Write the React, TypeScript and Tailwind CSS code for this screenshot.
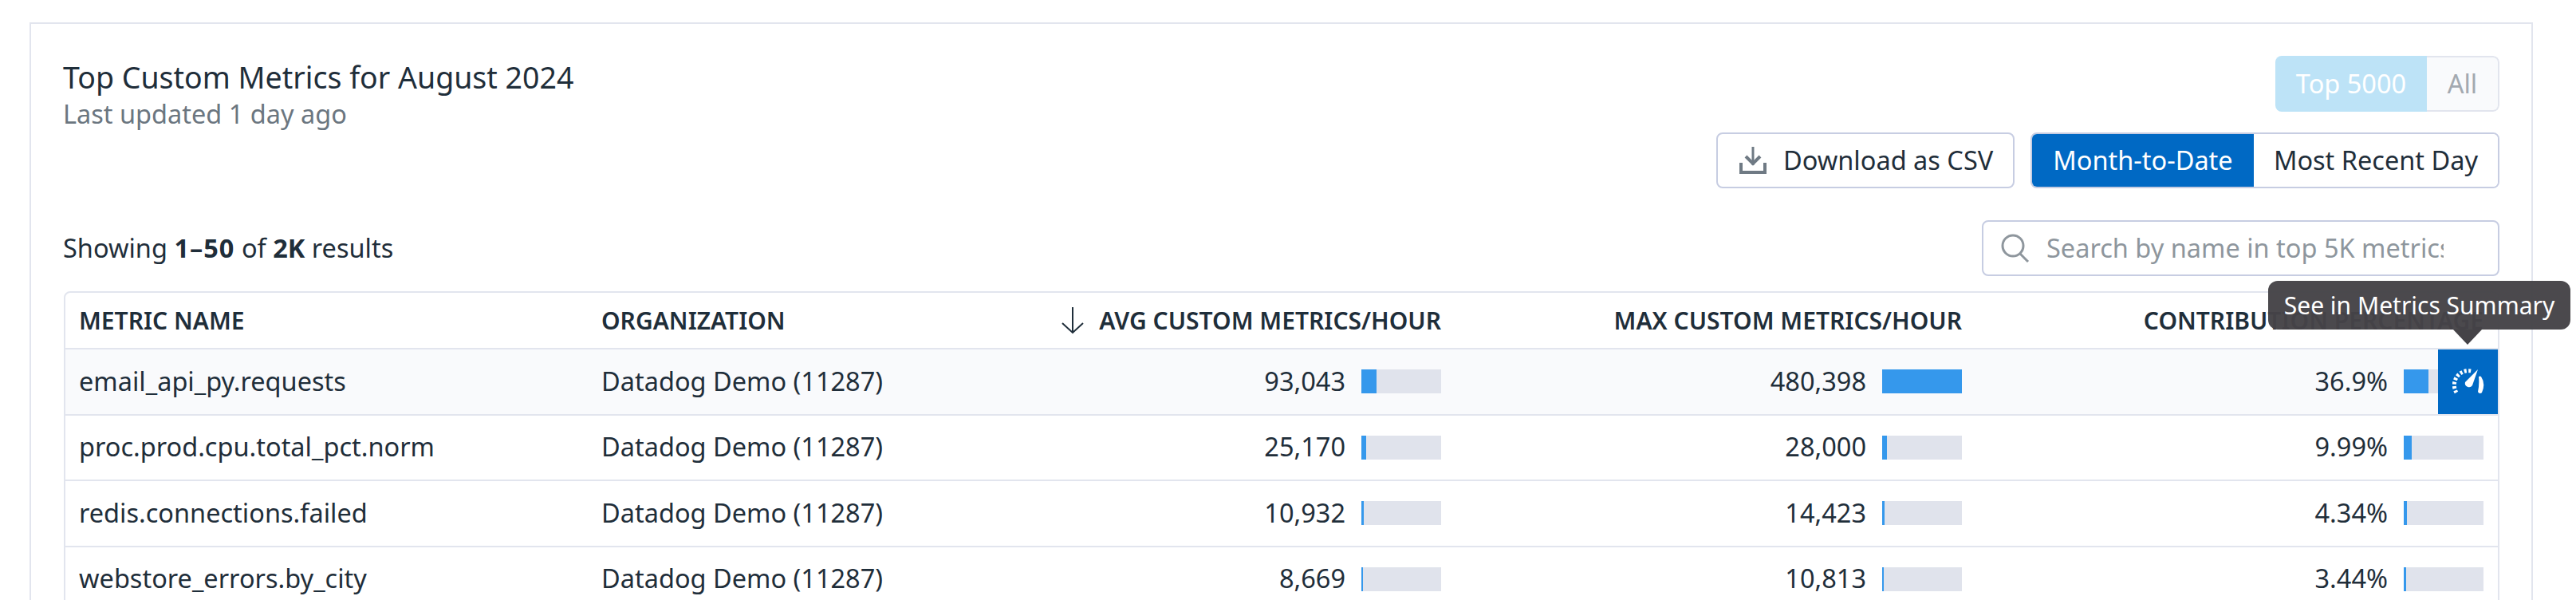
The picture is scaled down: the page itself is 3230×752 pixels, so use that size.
type Row = {
  name: string;
  avg: string;
  avgBar: number;
  max: string;
  maxBar: number;
  pct: string;
  pctBar: number;
};

const rows: Row[] = [
  { name: "email_api_py.requests", avg: "93,043", avgBar: 19, max: "480,398", maxBar: 100, pct: "36.9%", pctBar: 31 },
  { name: "proc.prod.cpu.total_pct.norm", avg: "25,170", avgBar: 6, max: "28,000", maxBar: 6, pct: "9.99%", pctBar: 10 },
  { name: "redis.connections.failed", avg: "10,932", avgBar: 3, max: "14,423", maxBar: 3, pct: "4.34%", pctBar: 4 },
  { name: "webstore_errors.by_city", avg: "8,669", avgBar: 2, max: "10,813", maxBar: 2, pct: "3.44%", pctBar: 3 },
];

const gridCols = "grid grid-cols-[654px_464px_625px_653px_654px]";

function ValueBar({ value, fill }: { value: string; fill: number }) {
  return (
    <div className="flex items-center justify-end gap-5 pr-[18px]">
      <span>{value}</span>
      <div className="h-[30px] w-[100px] bg-[#e0e3ec]">
        <div className="h-full bg-[#3598ec]" style={{ width: fill }} />
      </div>
    </div>
  );
}

function GaugeIcon() {
  return (
    <svg width="40" height="32" viewBox="0 0 40 32" fill="none">
      <path d="M5 30 A18 18 0 0 1 24 3" stroke="white" strokeWidth="5" strokeDasharray="3 2.4" />
      <path d="M33 10 Q35 9 36 10 Q42 19 37 30 A3 3 0 0 1 32 29 Q34 20 33 10 Z" fill="white" />
      <path d="M32 1 L25 21 A5 5 0 0 1 16 17 Z" fill="white" />
    </svg>
  );
}

export default function App() {
  return (
    <div className="h-[752px] overflow-hidden bg-white pt-[28px] pl-[37px] font-['Noto_Sans',sans-serif] text-[#1f2e3a]">
      <div className="relative h-[800px] w-[3139px] border-2 border-[#e2e5ee] px-[40px] pt-[40px]">
        <div className="flex justify-between">
          <div>
            <h1 className="pt-[3px] text-[37.5px] leading-[48px] font-normal">Top Custom Metrics for August 2024</h1>
            <p className="text-[32.5px] leading-[44px] text-[#6b7680]">Last updated 1 day ago</p>
          </div>
          <div className="flex flex-col items-end gap-[26px]">
            <div className="flex h-[70px] w-[281px] overflow-hidden rounded-lg text-[32.5px]">
              <div className="flex w-[190px] items-center justify-center bg-[#bde3f7] text-white">Top 5000</div>
              <div className="flex flex-1 items-center justify-center rounded-r-lg border-2 border-l-0 border-[#e2e5ee] bg-[#f9fafc] text-[#a3a9b0]">All</div>
            </div>
            <div className="flex gap-5 text-[32.5px]">
              <button className="flex h-[70px] w-[374px] items-center gap-[21px] rounded-lg border-2 border-[#c7cde2] bg-white pl-[27px]">
                <svg width="34" height="34" viewBox="0 0 34 34" fill="none" stroke="#6f7a84">
                  <path d="M17 0 V23" strokeWidth="3" />
                  <path d="M8 12 L17 21 L26 12" strokeWidth="4" />
                  <path d="M2 20 V32 H32 V20" strokeWidth="4" />
                </svg>
                Download as CSV
              </button>
              <div className="flex h-[70px] w-[588px] overflow-hidden rounded-lg border-2 border-[#c7cde2]">
                <div className="-m-[2px] flex w-[282px] items-center justify-center bg-[#0069c4] text-white">Month-to-Date</div>
                <div className="flex flex-1 items-center justify-center bg-white">Most Recent Day</div>
              </div>
            </div>
          </div>
        </div>

        <div className="mt-[40px] flex items-center justify-between">
          <p className="text-[32.5px]">
            Showing <b className="font-bold tracking-[1px]">1–50</b> of <b className="font-bold">2K</b> results
          </p>
          <div className="flex h-[70px] w-[649px] items-center gap-[21px] rounded-lg border-2 border-[#c7cde2] pl-[22px]">
            <svg width="36" height="36" viewBox="0 0 36 36" fill="none" stroke="#8e969d" strokeWidth="3">
              <circle cx="15" cy="15" r="13" />
              <path d="M24 25 L34 35" />
            </svg>
            <span className="w-[498px] overflow-hidden text-[32.5px] whitespace-nowrap text-[#8e969d]">Search by name in top 5K metrics</span>
          </div>
        </div>

        <div className="mt-[19px] ml-px rounded-t-lg border-2 border-[#e2e5ee] text-[32.5px]">
          <div className={`${gridCols} h-[69px] items-center text-[30px] font-semibold`}>
            <div className="pl-[17px]">METRIC NAME</div>
            <div className="pl-[18px]">ORGANIZATION</div>
            <div className="flex items-center justify-end gap-[19px] pr-[18px]">
              <svg width="28" height="34" viewBox="0 0 28 34" fill="none" stroke="#1f2e3a" strokeWidth="2">
                <path d="M14 0 V32 M1 20 L14 32 L27 20" />
              </svg>
              AVG CUSTOM METRICS/HOUR
            </div>
            <div className="pr-[18px] text-right">MAX CUSTOM METRICS/HOUR</div>
            <div className="pr-[18px] text-right whitespace-nowrap">CONTRIBUTION PERCENTAGE</div>
          </div>
          {rows.map((row, i) => (
            <div
              key={row.name}
              className={`${gridCols} relative h-[82.5px] items-center border-t-2 border-[#e2e5ee] ${i === 0 ? "bg-[#f9fafc]" : ""}`}
            >
              <div className="pl-[17px]">{row.name}</div>
              <div className="pl-[18px]">Datadog Demo (11287)</div>
              <ValueBar value={row.avg} fill={row.avgBar} />
              <ValueBar value={row.max} fill={row.maxBar} />
              <ValueBar value={row.pct} fill={row.pctBar} />
              {i === 0 && (
                <div className="absolute top-0 right-0 bottom-0 flex w-[75px] items-center justify-center bg-[#0069c4]">
                  <GaugeIcon />
                </div>
              )}
            </div>
          ))}
        </div>

        <div className="absolute top-[322px] left-[2805px] flex h-[61px] w-[379px] items-center justify-center rounded-xl bg-[#454347]/97 text-[30px] text-white">
          See in Metrics Summary
          <div className="absolute top-full left-[232px] h-0 w-0 border-x-[18px] border-t-[19px] border-x-transparent border-t-[#454347]" />
        </div>
      </div>
    </div>
  );
}
